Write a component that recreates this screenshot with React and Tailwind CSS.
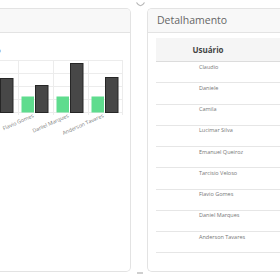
import React from "react";

const rows = [
  "Claudio",
  "Daniele",
  "Camila",
  "Lucimar Silva",
  "Emanuel Queiroz",
  "Tarcisio Veloso",
  "Flavio Gomes",
  "Daniel Marques",
  "Anderson Tavares",
];

const groups = [
  { x: -17, dark: 25, label: "" },
  { x: 18, dark: 32, label: "Flavio Gomes" },
  { x: 53, dark: 10, label: "Daniel Marques" },
  { x: 88, dark: 24, label: "Anderson Tavares" },
];

function Chart() {
  const base = 59;
  return (
    <svg width="131" height="90" viewBox="0 0 131 90" className="block">
      {[7, 20, 33, 46, 59].map((y) => (
        <line key={y} x1="0" x2="122" y1={y + 0.5} y2={y + 0.5} stroke="#ececec" strokeWidth="1" />
      ))}
      {[18, 53, 88, 122].map((x) => (
        <line key={x} x1={x + 0.5} x2={x + 0.5} y1="7" y2="62" stroke="#ececec" strokeWidth="1" />
      ))}
      {groups.map((g, i) => (
        <g key={i}>
          <rect x={g.x + 3.5} y={43.5} width="12.5" height={base - 43} fill="#5fdc8e" />
          <rect x={g.x + 17.5} y={g.dark + 0.5} width="12.5" height={base - g.dark} fill="#474747" stroke="#262626" strokeWidth="1" />
          {g.label && (
            <text
              x={g.x + 16}
              y={64}
              textAnchor="end"
              fontSize="5.3"
              fill="#777"
              fontFamily="'Open Sans', sans-serif"
              transform={`rotate(-24 ${g.x + 16} 64)`}
            >
              {g.label}
            </text>
          )}
        </g>
      ))}
    </svg>
  );
}

export default function App() {
  return (
    <div
      className="relative w-[280px] h-[280px] overflow-hidden bg-white flex gap-[16px] pt-[8px]"
      style={{ fontFamily: "'Open Sans', 'Liberation Sans', sans-serif" }}
    >
      {/* Left panel */}
      <div className="w-[131px] h-[264px] flex-none border border-l-0 border-[#e3e3e3] rounded-r-[5px] bg-white overflow-hidden flex flex-col">
        <div className="h-[24px] flex-none bg-[#f8f8f8] border-b border-[#e3e3e3]" />
        <div className="pt-[13px]">
          <p className="h-[7px] leading-[8px] text-[8px] text-[#666] whitespace-nowrap -ml-[26px]">Gráfico</p>
          <Chart />
        </div>
      </div>

      {/* Right panel */}
      <div className="w-[160px] h-[264px] flex-none border border-r-0 border-[#e3e3e3] rounded-l-[5px] bg-white overflow-hidden flex flex-col">
        <div className="h-[24px] flex-none bg-[#f8f8f8] border-b border-[#e3e3e3] flex items-center px-[9px]">
          <span className="text-[10.5px] text-[#666] leading-none">Detalhamento</span>
        </div>
        <div className="pl-[8px] pt-[5px]">
          <div className="h-[24px] bg-[#f5f5f5] border-b border-[#dcdcdc] flex items-center">
            <span className="w-[104px] text-center text-[8px] font-bold text-[#444] leading-none">Usuário</span>
          </div>
          {rows.map((r) => (
            <div key={r} className="h-[21.25px] border-b border-[#e6e6e6] pl-[43px] pt-[1.5px]">
              <span className="block text-[5.5px] leading-[7px] text-[#777] whitespace-nowrap">{r}</span>
            </div>
          ))}
        </div>
      </div>

      {/* small handle icons between panels */}
      <svg className="absolute left-[135px] top-[1px]" width="11" height="7" viewBox="0 0 11 7">
        <path d="M1.5 1.5 Q5.5 8 9.5 1.5" fill="none" stroke="#b5b5b5" strokeWidth="1.2" />
      </svg>
      <div className="absolute left-[137px] top-[272px] w-[6px] h-[2px] bg-[#cfcfcf]" />
    </div>
  );
}
